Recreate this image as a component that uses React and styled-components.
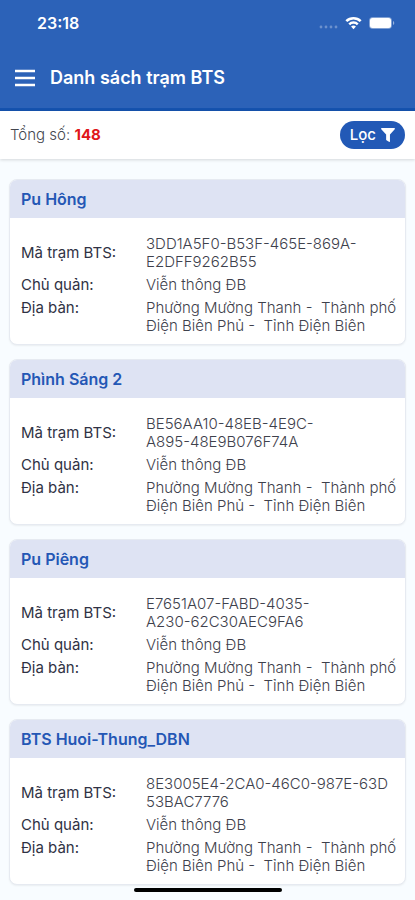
import React from "react";
import styled, { createGlobalStyle } from "styled-components";

const stations = [
  {
    name: "Pu Hông",
    code: "3DD1A5F0-B53F-465E-869A-\nE2DFF9262B55",
  },
  {
    name: "Phình Sáng 2",
    code: "BE56AA10-48EB-4E9C-\nA895-48E9B076F74A",
  },
  {
    name: "Pu Piêng",
    code: "E7651A07-FABD-4035-\nA230-62C30AEC9FA6",
  },
  {
    name: "BTS Huoi-Thung_DBN",
    code: "8E3005E4-2CA0-46C0-987E-63D\n53BAC7776",
  },
];

const owner = "Viễn thông ĐB";
const area = "Phường Mường Thanh -  Thành phố Điện Biên Phủ -  Tỉnh Điện Biên";

const StationCard = ({ station }) => (
  <Card>
    <CardTitle>{station.name}</CardTitle>
    <Details>
      <Label $center>Mã trạm BTS:</Label>
      <Value>{station.code}</Value>
      <Label>Chủ quản:</Label>
      <Value>{owner}</Value>
      <Label>Địa bàn:</Label>
      <Value>{area}</Value>
    </Details>
  </Card>
);

const App = () => {
  return (
    <Screen>
      <GlobalStyle />
      <Header>
        <StatusBar>
          <Clock>23:18</Clock>
          <StatusIcons>
            <svg width="20" height="4" viewBox="0 0 20 4" fill="#fff" opacity="0.3">
              <circle cx="2" cy="2" r="1.4" />
              <circle cx="7" cy="2" r="1.4" />
              <circle cx="12" cy="2" r="1.4" />
              <circle cx="17" cy="2" r="1.4" />
            </svg>
            <svg width="17" height="14" viewBox="0 0 18 14" fill="none" stroke="#fff" strokeWidth="2.7">
              <path d="M1.4 5.1a10.8 10.8 0 0 1 15.2 0" />
              <path d="M4.5 8.4a6.4 6.4 0 0 1 9 0" />
              <path d="M9 13.6 6.4 10.8a3.7 3.7 0 0 1 5.2 0z" fill="#fff" stroke="none" />
            </svg>
            <svg width="27" height="14" viewBox="0 0 27 14">
              <rect x="1" y="1" width="23" height="12" rx="4" fill="#fff" opacity="0.4" />
              <rect x="2" y="2" width="21" height="10" rx="2.5" fill="#fff" />
              <path d="M25 5v4a2.2 2.2 0 0 0 0-4z" fill="#fff" opacity="0.5" />
            </svg>
          </StatusIcons>
        </StatusBar>
        <NavBar>
          <MenuButton aria-label="Menu">
            <svg width="22" height="20" viewBox="0 0 22 20" stroke="#fff" strokeWidth="2.6">
              <path d="M1 3h20M1 10h20M1 17h20" />
            </svg>
          </MenuButton>
          <Title>Danh sách trạm BTS</Title>
        </NavBar>
      </Header>

      <Summary>
        <Total>
          Tổng số: <Count>148</Count>
        </Total>
        <FilterButton>
          Lọc
          <svg width="14" height="14" viewBox="0 0 15 15" fill="#fff">
            <path d="M.8 0h13.4c.7 0 1 .9.5 1.4L9.6 6.9v7.4c0 .6-.6.9-1.1.5L5.9 13a1 1 0 0 1-.4-.8V6.9L.3 1.4C-.2.9.1 0 .8 0z" />
          </svg>
        </FilterButton>
      </Summary>

      <List>
        {stations.map((station) => (
          <StationCard key={station.name} station={station} />
        ))}
      </List>
      <HomeIndicator />
    </Screen>
  );
};

export default App;

const GlobalStyle = createGlobalStyle`
  * {
    box-sizing: border-box;
  }
  body {
    margin: 0;
    font-family: Inter, "Liberation Sans", sans-serif;
    font-size: 15px;
    line-height: 18px;
    background-color: #f8fcff;
  }
  button {
    border: none;
    padding: 0;
    font: inherit;
    color: inherit;
    cursor: pointer;
  }
`;

const Screen = styled.div`
  height: 100vh;
  display: flex;
  flex-direction: column;
  overflow: hidden;
`;

const Header = styled.header`
  flex-shrink: 0;
  color: #fff;
  background-color: #2c62b8;
  border-bottom: 3px solid #1552ae;
`;

const StatusBar = styled.div`
  height: 46px;
  padding: 0 20px 0 37px;
  display: flex;
  align-items: center;
  justify-content: space-between;
`;

const Clock = styled.span`
  font-size: 16px;
  font-weight: 600;
`;

const StatusIcons = styled.div`
  display: flex;
  align-items: center;
  gap: 6px;
  svg:first-child {
    margin-top: 8px;
  }
`;

const NavBar = styled.div`
  height: 62px;
  padding: 2px 14px 0;
  display: flex;
  align-items: center;
  gap: 14px;
`;

const MenuButton = styled.button`
  display: flex;
  background: none;
`;

const Title = styled.h1`
  margin: 0;
  font-size: 18px;
  font-weight: 600;
  line-height: 22px;
`;

const Summary = styled.div`
  flex-shrink: 0;
  height: 48px;
  padding: 0 10px;
  display: flex;
  align-items: center;
  justify-content: space-between;
  background-color: #fff;
  box-shadow: 0 1px 3px rgba(0, 0, 0, 0.15);
`;

const Total = styled.div`
  font-weight: 300;
  color: #44474f;
`;

const Count = styled.strong`
  font-weight: 700;
  color: #e0161b;
`;

const FilterButton = styled.button`
  height: 28px;
  padding: 0 10px;
  display: flex;
  align-items: center;
  gap: 5px;
  border-radius: 14px;
  font-weight: 500;
  color: #fff;
  background-color: #2259b6;
`;

const List = styled.main`
  flex: 1;
  padding: 20px 9px;
  display: flex;
  flex-direction: column;
  gap: 14px;
  overflow: hidden;
`;

const Card = styled.section`
  flex-shrink: 0;
  border: 1px solid #e6eaf1;
  border-radius: 8px;
  background-color: #fff;
  box-shadow: 0 1px 2px rgba(0, 0, 0, 0.06);
  overflow: hidden;
`;

const CardTitle = styled.h2`
  margin: 0;
  padding: 10px 11px;
  font-size: 16px;
  font-weight: 600;
  line-height: 18px;
  color: #2457b5;
  background-color: #dee3f3;
`;

const Details = styled.dl`
  margin: 0;
  padding: 17px 8px 9px 11px;
  display: grid;
  grid-template-columns: 125px 1fr;
  row-gap: 5px;
`;

const Label = styled.dt`
  align-self: ${({ $center }) => ($center ? "center" : "start")};
  color: #303244;
`;

const Value = styled.dd`
  margin: 0;
  font-weight: 300;
  white-space: pre-wrap;
  color: #3e414c;
`;

const HomeIndicator = styled.div`
  position: fixed;
  bottom: 8px;
  left: 50%;
  width: 148px;
  height: 4px;
  transform: translateX(-50%);
  border-radius: 2px;
  background-color: #000;
`;
